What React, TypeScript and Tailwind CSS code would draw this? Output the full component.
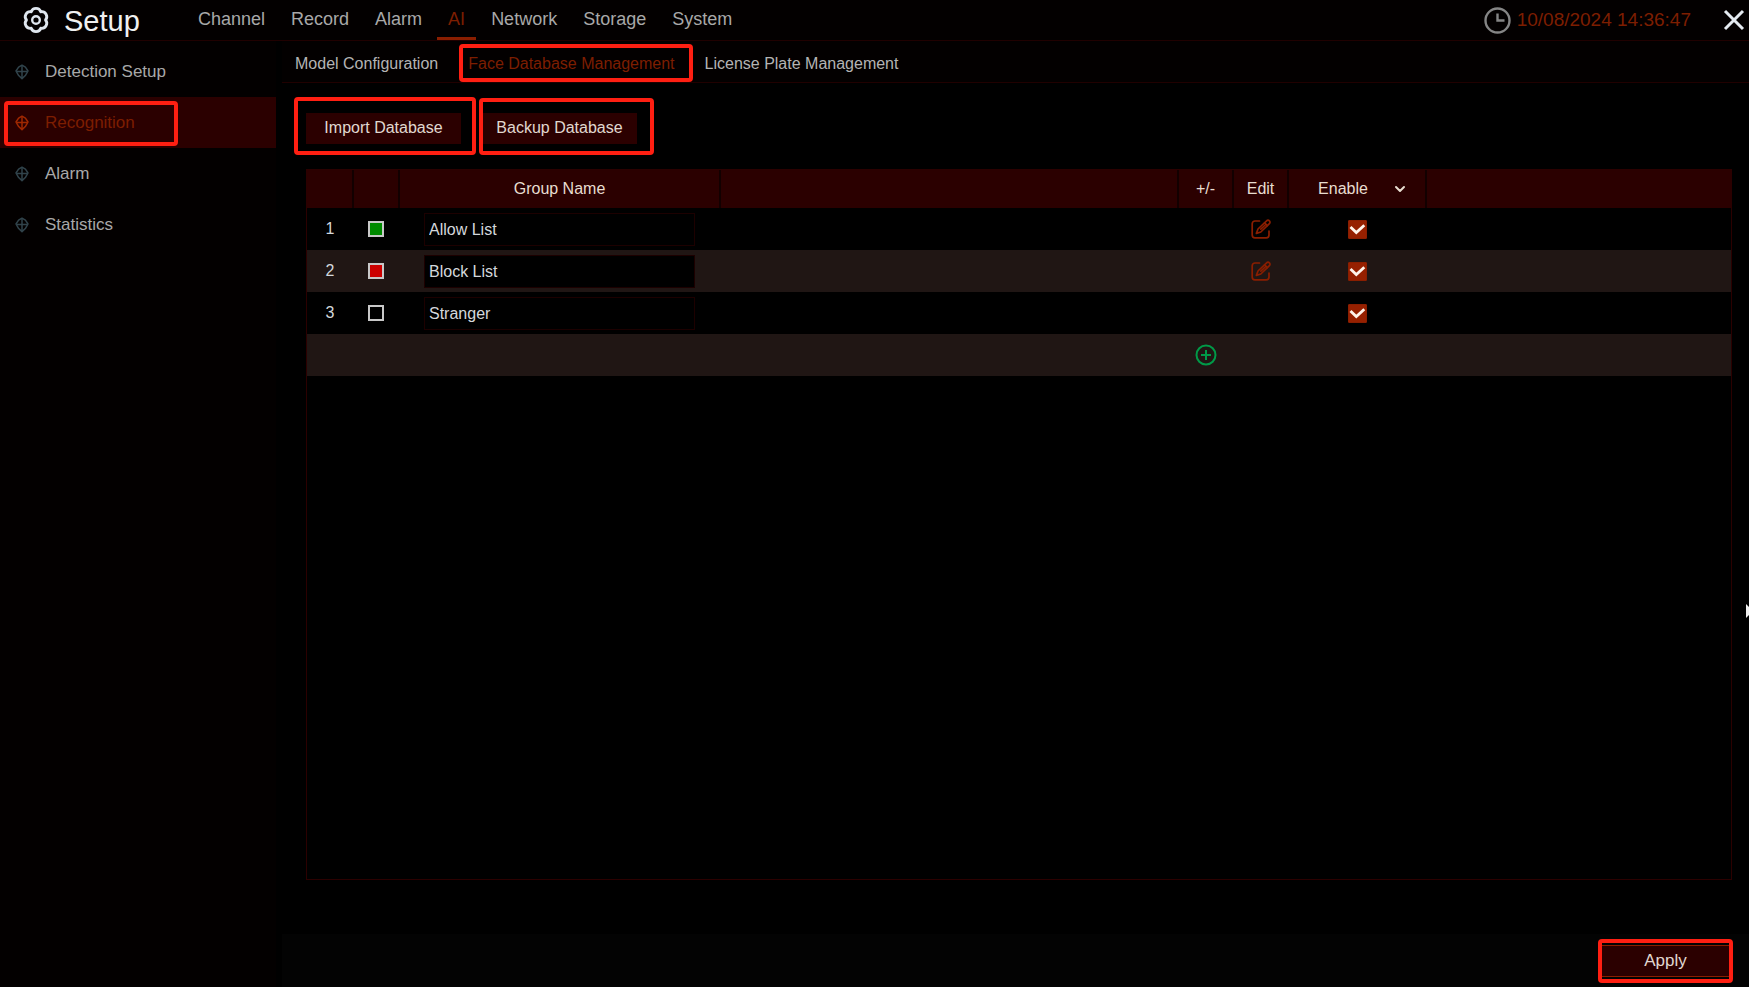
import { useState } from "react";
import { ChevronDown } from "lucide-react";

interface GroupProps {
  id: number;
  name: string;
  color: string;
  editable: boolean;
  enabled: boolean;
}

const menu = ["Channel", "Record", "Alarm", "AI", "Network", "Storage", "System"];
const sections = ["Detection Setup", "Recognition", "Alarm", "Statistics"];
const tabs = ["Model Configuration", "Face Database Management", "License Plate Management"];

const initialGroups: GroupProps[] = [
  { id: 1, name: "Allow List", color: "bg-[#008a00]", editable: true, enabled: true },
  { id: 2, name: "Block List", color: "bg-[#cc0000]", editable: true, enabled: true },
  { id: 3, name: "Stranger", color: "bg-black", editable: false, enabled: true },
];

function Highlight({ className }: { className: string }) {
  return <span className={`pointer-events-none absolute rounded-sm border-4 border-[#ff1f12] ${className}`} />;
}

function GearIcon() {
  return (
    <svg className="size-7" viewBox="0 0 28 28" fill="none" stroke="#dfe6ee" strokeWidth="2.8" strokeLinejoin="round">
      <path d="M9.25 5.8A5 5 0 0 1 18.75 5.8A5 5 0 0 1 23.5 14A5 5 0 0 1 18.75 22.2A5 5 0 0 1 9.25 22.2A5 5 0 0 1 4.5 14A5 5 0 0 1 9.25 5.8Z" />
      <circle cx="14" cy="14" r="3.8" strokeWidth="2.4" />
    </svg>
  );
}

function SectionIcon() {
  return (
    <svg className="h-4 w-3.5" viewBox="0 0 14 16" fill="none" stroke="currentColor" strokeWidth="1.5" strokeLinejoin="round">
      <path d="M7 1.2L10.4 3.2L13 7L10.6 11.2L7 14.6L3.4 11.2L1 7L3.6 3.2Z" />
      <path d="M7 1.5V14.5M1.5 7.5H12.5" />
    </svg>
  );
}

function EditIcon() {
  return (
    <svg className="size-5" viewBox="0 0 20 20" fill="none" stroke="currentColor" strokeWidth="1.7" strokeLinejoin="round" strokeLinecap="round">
      <path d="M8.5 2H4C2.4 2 1.2 3.2 1.2 4.8V16C1.2 17.6 2.4 18.8 4 18.8H15.2C16.8 18.8 18 17.6 18 16V12" />
      <path d="M5.4 14.4L7 10L15.6 1.8C16.4 1 17.6 1 18.4 1.8C19.2 2.6 19.2 3.8 18.4 4.6L9.8 13Z" />
      <path d="M9.8 10.2L14.2 6M13.6 3.8L16.4 6.6" />
    </svg>
  );
}

export default function App() {
  const [groups, setGroups] = useState<GroupProps[]>(initialGroups);

  function handleRename(id: number, name: string) {
    setGroups(groups.map(group => group.id === id ? { ...group, name } : group))
  }
  function handleToggle(id: number) {
    setGroups(groups.map(group => group.id === id ? { ...group, enabled: !group.enabled } : group))
  }

  return (
    <div className="relative flex min-h-screen flex-col overflow-hidden bg-black font-['Liberation_Sans',Arial,sans-serif] text-base text-[#c8c8c8]">

      <header className="flex h-[41px] items-stretch border-b border-[#200000] bg-[#030000] pr-1">
        <div className="flex w-[187px] items-center gap-3.5 pl-[22px]">
          <GearIcon />
          <h1 className="pt-0.5 text-[29px] leading-10 text-[#f0f0f0]">Setup</h1>
        </div>
        <nav className="flex gap-1 text-lg">
          {menu.map(item => (
            <button
              key={item}
              className={item === "AI"
                ? "border-b-3 border-[#8a1e00] px-[11px] leading-9 text-[#7d1e00]"
                : "border-b-3 border-transparent px-[11px] leading-9 text-[#a8a8a8]"}
            >
              {item}
            </button>
          ))}
        </nav>
        <div className="ml-auto flex items-center gap-1.5">
          <svg className="size-[27px]" viewBox="0 0 27 27" fill="none" stroke="#858585" strokeWidth="2.4">
            <circle cx="13.5" cy="13.5" r="12" />
            <path d="M13.5 6.5V13.5H20.5" />
          </svg>
          <time className="text-[19px] text-[#7d1e00]">10/08/2024 14:36:47</time>
          <button aria-label="Close" className="ml-[26px]">
            <svg className="size-[22px]" viewBox="0 0 22 22" fill="none" stroke="#e4eaf0" strokeWidth="3">
              <path d="M2 2L20 20M20 2L2 20" />
            </svg>
          </button>
        </div>
      </header>

      <div className="flex flex-1 items-stretch gap-1.5">
        <aside className="w-[276px] shrink-0 bg-[#030000] pt-[5px]">
          {sections.map(section => (
            <button
              key={section}
              className={section === "Recognition"
                ? "relative flex h-[51px] w-full items-center gap-4 bg-[#2b0000] pl-[15px] text-[17px] text-[#7d1e00]"
                : "flex h-[51px] w-full items-center gap-4 pl-[15px] text-[17px] text-[#a8a8a8]"}
            >
              <span className={section === "Recognition" ? "text-[#a02800]" : "text-[#31434b]"}>
                <SectionIcon />
              </span>
              {section}
              {section === "Recognition" && <Highlight className="top-1 bottom-0.5 left-1 w-[174px]" />}
            </button>
          ))}
        </aside>

        <main className="flex min-w-0 flex-1 flex-col">
          <div className="flex h-[42px] items-center gap-2 border-b border-[#200000] bg-[#030000] pl-0.5">
            {tabs.map(tab => (
              <button
                key={tab}
                className={tab === "Face Database Management"
                  ? "relative h-full px-[11px] pt-1 text-[#7d1e00]"
                  : "h-full px-[11px] pt-1 text-[#b4b4b4]"}
              >
                {tab}
                {tab === "Face Database Management" && <Highlight className="top-[3px] -right-[7px] bottom-0 left-0.5" />}
              </button>
            ))}
          </div>

          <div className="flex flex-1 flex-col pt-[30px] pr-[17px] pb-[54px] pl-6">
            <div className="mb-[25px] flex gap-[21px] text-[#e0d8d0]">
              <button className="relative h-[31px] w-[155px] bg-[#2b0000] pb-0.5">
                Import Database
                <Highlight className="-top-4 -right-[15px] -bottom-[11px] -left-3" />
              </button>
              <button className="relative h-[31px] w-[155px] bg-[#2b0000] pb-0.5">
                Backup Database
                <Highlight className="-top-[15px] -right-[17px] -bottom-[11px] left-[-3px]" />
              </button>
            </div>

            <div className="flex-1 border border-[#2b0000]">
              <table className="w-full table-fixed border-collapse">
                <colgroup>
                  <col className="w-[46px]" />
                  <col className="w-[46px]" />
                  <col className="w-[321px]" />
                  <col />
                  <col className="w-[55px]" />
                  <col className="w-[55px]" />
                  <col className="w-[138px]" />
                  <col className="w-[305px]" />
                </colgroup>
                <thead className="bg-[#2b0000] text-[#e8ddd0]">
                  <tr className="h-[38px] divide-x-2 divide-[#120000] *:p-0 *:font-normal">
                    <th></th>
                    <th></th>
                    <th>Group Name</th>
                    <th></th>
                    <th>+/-</th>
                    <th>Edit</th>
                    <th>
                      <button className="flex w-full items-center justify-center gap-6 pl-3">
                        Enable
                        <ChevronDown className="size-4" strokeWidth={3} />
                      </button>
                    </th>
                    <th></th>
                  </tr>
                </thead>
                <tbody className="text-center text-[#d4d8dc]">
                  {groups.map(group => (
                    <tr key={group.id} className="h-[42px] *:p-0 even:bg-[#201614]">
                      <td>{group.id}</td>
                      <td>
                        <button aria-label={`Color of ${group.name}`} className={`mx-auto block size-4 border-2 border-[#c8c8c8] ${group.color}`} />
                      </td>
                      <td>
                        <input
                          type="text"
                          aria-label={`Group name ${group.id}`}
                          className="mx-auto block h-[33px] w-[271px] border border-[#1c0000] bg-black px-1 pt-0.5 outline-none"
                          value={group.name}
                          onChange={(e) => handleRename(group.id, e.target.value)}
                        />
                      </td>
                      <td></td>
                      <td></td>
                      <td>
                        {group.editable && (
                          <button aria-label={`Edit ${group.name}`} className="mx-auto block text-[#8a1e00]">
                            <EditIcon />
                          </button>
                        )}
                      </td>
                      <td>
                        <label className="relative mx-auto block size-[19px]">
                          <input
                            type="checkbox"
                            aria-label={`Enable ${group.name}`}
                            className="peer block size-full appearance-none rounded-[1px] border border-[#8a1e00] checked:bg-[#962000]"
                            checked={group.enabled}
                            onChange={() => handleToggle(group.id)}
                          />
                          <svg className="pointer-events-none absolute inset-0 hidden size-full peer-checked:block" viewBox="0 0 19 19" fill="none" stroke="#fff4ea" strokeWidth="2.8">
                            <path d="M2.5 7L8.3 12.5L16.3 5.2" />
                          </svg>
                        </label>
                      </td>
                      <td></td>
                    </tr>
                  ))}
                  <tr className="h-[42px] bg-[#201614] *:p-0">
                    <td colSpan={4}></td>
                    <td>
                      <button aria-label="Add group" className="mx-auto block">
                        <svg className="size-[22px]" viewBox="0 0 22 22" fill="none" stroke="#009a48" strokeWidth="2">
                          <circle cx="11" cy="11" r="9.5" />
                          <path d="M11 6V16M6 11H16" />
                        </svg>
                      </button>
                    </td>
                    <td colSpan={3}></td>
                  </tr>
                </tbody>
              </table>
            </div>
          </div>

          <footer className="flex h-[53px] items-center justify-end bg-[#030303] pr-5">
            <button className="relative h-8 w-[127px] border-y border-[#8a1e00] bg-[#2b0000] text-[17px] text-[#e0d8d0]">
              Apply
              <Highlight className="-inset-x-1 -inset-y-[7px]" />
            </button>
          </footer>
        </main>
      </div>

      <svg className="absolute top-[604px] right-0 h-3.5 w-[3px]" viewBox="0 0 3 14" fill="#f0f0f0">
        <path d="M0 0L3 3V11L0 14Z" />
      </svg>
    </div>
  )
}
